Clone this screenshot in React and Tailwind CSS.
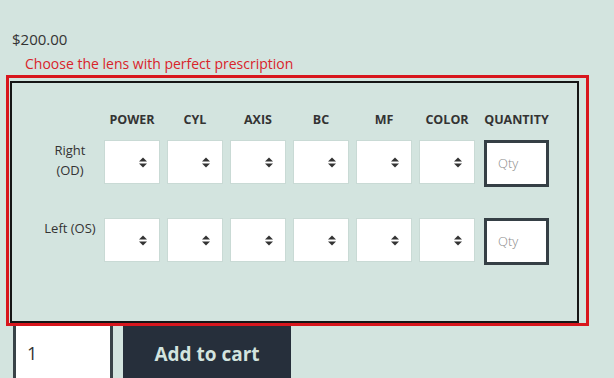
const COLS = ['POWER', 'CYL', 'AXIS', 'BC', 'MF', 'COLOR'];

function Arrows() {
  return (
    <svg width="8" height="11" viewBox="0 0 8 11" className="text-[#333]">
      <path d="M0 4.5 L4 0.5 L8 4.5 Z" fill="currentColor" />
      <path d="M0 6.5 L4 10.5 L8 6.5 Z" fill="currentColor" />
    </svg>
  );
}

function SelectBox() {
  return (
    <div className="w-[56px] h-[44px] bg-white border border-[#c9dad5] flex items-center justify-end pr-[12px]">
      <Arrows />
    </div>
  );
}

function QtyBox() {
  return (
    <div className="ml-[2px] w-[65px] h-[47px] bg-white border-[3px] border-[#353f45] flex items-center pl-[11px] text-[13px] font-light text-[#8a8a8a]">
      Qty
    </div>
  );
}

function Row({ label }) {
  return (
    <div className="flex">
      <div className="w-[92px] pl-[24px] text-center text-[13px] leading-[20px] text-[#333]">{label}</div>
      <div className="flex gap-[7px]">
        {COLS.map((c) => (
          <SelectBox key={c} />
        ))}
        <QtyBox />
      </div>
    </div>
  );
}

export default function App() {
  return (
    <div className="w-[614px] h-[378px] overflow-hidden bg-[#d3e4df] font-['Open_Sans',sans-serif]">
      <div className="pl-[12px] pt-[30px] text-[15px] leading-[18px] text-[#333]">$200.00</div>
      <div className="pl-[25px] mt-[7px] text-[14px] leading-[18px] text-[#d9232a]">
        Choose the lens with perfect prescription
      </div>
      {/* prescription box */}
      <div className="mt-[2px] ml-[6px] w-[583px] h-[251px] border-[3px] border-[#d8161d]">
        <div className="mt-[3px] ml-[1px] mr-[7px] h-[242px] border-2 border-[#151515] pt-[29px]">
          <div className="flex">
            <div className="w-[92px]" />
            <div className="flex gap-[7px] text-[12.5px] leading-[16px] font-bold text-[#333]">
              {COLS.map((c) => (
                <div key={c} className="w-[56px] text-center">{c}</div>
              ))}
              <div className="ml-[2px] w-[65px] text-center whitespace-nowrap">QUANTITY</div>
            </div>
          </div>
          <div className="mt-[12px]">
            <Row label={<>Right<br />(OD)</>} />
          </div>
          <div className="mt-[31px]">
            <Row label="Left (OS)" />
          </div>
        </div>
      </div>
      {/* cart row */}
      <div className="flex">
        <div className="ml-[13px] w-[100px] h-[60px] bg-white border-x-[3px] border-[#394348] pl-[11px] pt-[15px] text-[18px] leading-[24px] text-[#333]">
          1
        </div>
        <div className="ml-[10px] w-[168px] h-[60px] bg-[#262f3b] text-[#d3e4df] text-[19px] font-bold flex justify-center pt-[15px] leading-[26px]">
          Add to cart
        </div>
      </div>
    </div>
  );
}
